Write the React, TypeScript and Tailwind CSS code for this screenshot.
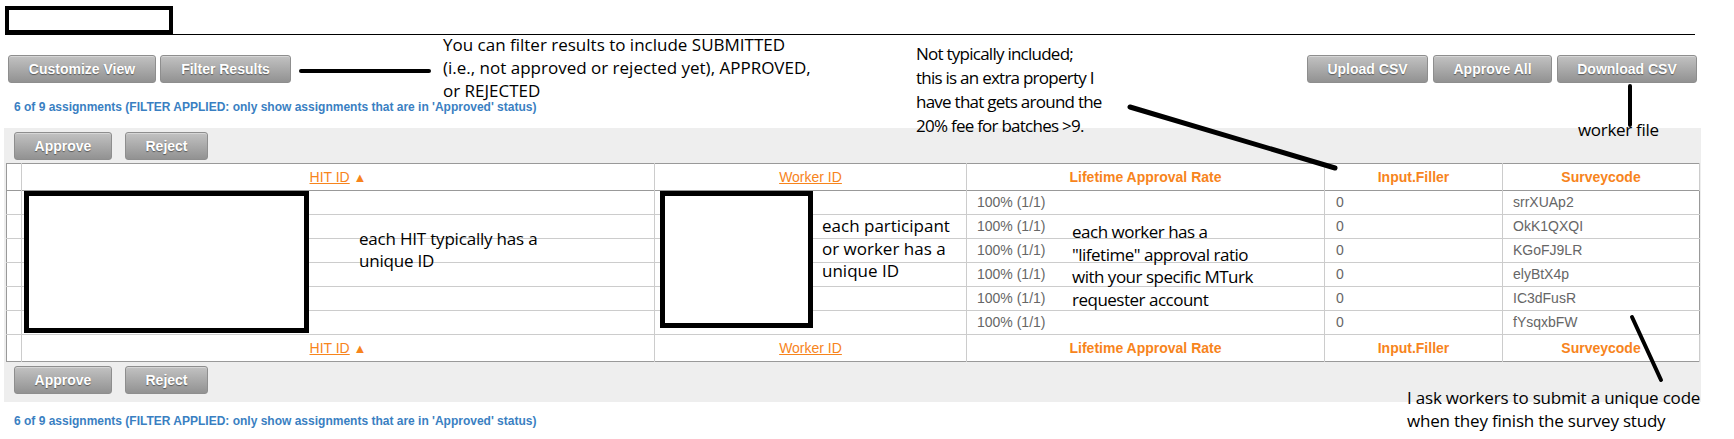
import React from 'react';

const btn =
  'h-[28px] rounded-[3px] border border-[#8e8e8e] bg-linear-to-b from-[#c2c2c2] to-[#929292] text-[14px] font-bold text-white [text-shadow:0_1px_1px_rgba(0,0,0,0.45)] shadow-[inset_0_1px_0_rgba(255,255,255,0.35)]';

const codes = ['srrXUAp2', 'OkK1QXQI', 'KGoFJ9LR', 'elyBtX4p', 'IC3dFusR', 'fYsqxbFW'];

function Note({ className, lines }: { className: string; lines: string[] }) {
  return (
    <div className={`absolute whitespace-nowrap text-black font-['Open_Sans',sans-serif] ${className}`}>
      {lines.map((l) => (
        <div key={l}>{l}</div>
      ))}
    </div>
  );
}

function HeaderRow({ bottom }: { bottom?: boolean }) {
  const base = 'border-x border-[#cccccc] text-center text-[14px] text-[#f7841c]';
  return (
    <tr className={`h-[27px] ${bottom ? 'border-t border-[#cccccc]' : 'border-b border-[#999999]'}`}>
      <td className="border-r border-[#cccccc]" />
      <td className={base}>
        <span className="underline">HIT ID</span> <span className="text-[13px]">▲</span>
      </td>
      <td className={base}>
        <span className="underline">Worker ID</span>
      </td>
      <td className={`${base} font-bold`}>Lifetime Approval Rate</td>
      <td className={`${base} font-bold`}>Input.Filler</td>
      <td className={`${base} font-bold`}>Surveycode</td>
    </tr>
  );
}

function Actions() {
  return (
    <div className="flex gap-[13px] pl-[10px]">
      <button className={`${btn} w-[98px]`}>Approve</button>
      <button className={`${btn} w-[83px]`}>Reject</button>
    </div>
  );
}

const status =
  "6 of 9 assignments (FILTER APPLIED: only show assignments that are in 'Approved' status)";

export default function App() {
  return (
    <div className="relative h-[439px] w-[1734px] overflow-hidden bg-white font-['Liberation_Sans',Arial,sans-serif]">
      {/* title bar */}
      <div className="ml-[5px] w-[1690px] border-b border-black pt-[6px]">
        <div className="h-[28px] w-[168px] border-4 border-black bg-white" />
      </div>

      {/* toolbar */}
      <div className="mt-[20px] flex justify-between pl-[8px] pr-[37px]">
        <div className="flex gap-[4px]">
          <button className={`${btn} w-[148px]`}>Customize View</button>
          <button className={`${btn} w-[131px]`}>Filter Results</button>
        </div>
        <div className="flex gap-[5px]">
          <button className={`${btn} w-[121px]`}>Upload CSV</button>
          <button className={`${btn} w-[119px]`}>Approve All</button>
          <button className={`${btn} w-[140px]`}>Download CSV</button>
        </div>
      </div>

      <div className="mt-[17px] pl-[14px] text-[12px] leading-[14px] font-bold text-[#3a7fc2]">{status}</div>

      {/* results panel */}
      <div className="mt-[14px] ml-[4px] w-[1697px] bg-[#eeeeee] pt-[4px] pb-[8px]">
        <Actions />
        <table className="mt-[3px] ml-[2px] w-[1693px] table-fixed border-collapse border border-[#999999] bg-white">
          <colgroup>
            <col className="w-[15px]" />
            <col className="w-[633px]" />
            <col className="w-[312px]" />
            <col className="w-[358px]" />
            <col className="w-[178px]" />
            <col className="w-[197px]" />
          </colgroup>
          <tbody>
            <HeaderRow />
            {codes.map((c) => (
              <tr key={c} className="h-[24px] border-b border-[#cccccc] text-[14px] text-[#666666]">
                <td className="border-r border-[#cccccc]" />
                <td className="border-r border-[#cccccc]" />
                <td className="border-r border-[#cccccc]" />
                <td className="border-r border-[#cccccc] pl-[10px]">100% (1/1)</td>
                <td className="border-r border-[#cccccc] pl-[11px]">0</td>
                <td className="pl-[10px]">{c}</td>
              </tr>
            ))}
            <HeaderRow bottom />
          </tbody>
        </table>
        <div className="mt-[4px]">
          <Actions />
        </div>
      </div>

      <div className="mt-[12px] pl-[14px] text-[12px] leading-[14px] font-bold text-[#3a7fc2]">{status}</div>

      {/* redaction boxes */}
      <div className="absolute left-[24px] top-[191px] h-[142px] w-[285px] border-[5px] border-black bg-white" />
      <div className="absolute left-[660px] top-[191px] h-[137px] w-[153px] border-[5px] border-black bg-white" />

      {/* annotation strokes */}
      <svg className="pointer-events-none absolute inset-0" width="1734" height="439">
        <g stroke="#000" strokeLinecap="round">
          <line x1="301" y1="71" x2="429" y2="71" strokeWidth="4" />
          <line x1="1130" y1="107" x2="1335" y2="168" strokeWidth="5" />
          <line x1="1630" y1="86" x2="1630" y2="125" strokeWidth="4" />
          <line x1="1632" y1="317" x2="1661" y2="380" strokeWidth="4" />
        </g>
      </svg>

      {/* annotation text */}
      <Note
        className="left-[443px] top-[33px] text-[17px] leading-[23px]"
        lines={['You can filter results to include SUBMITTED', '(i.e., not approved or rejected yet), APPROVED,', 'or REJECTED']}
      />
      <Note
        className="left-[916px] top-[42px] text-[17px] leading-[24px] tracking-[-0.75px]"
        lines={['Not typically included;', 'this is an extra property I', 'have that gets around the', '20% fee for batches >9.']}
      />
      <Note className="left-[1578px] top-[118px] text-[17px] leading-[23px] tracking-[-0.3px]" lines={['worker file']} />
      <Note
        className="left-[359px] top-[228px] text-[17px] leading-[22px] tracking-[-0.2px]"
        lines={['each HIT typically has a', 'unique ID']}
      />
      <Note
        className="left-[822px] top-[215px] text-[17px] leading-[22.5px]"
        lines={['each participant', 'or worker has a', 'unique ID']}
      />
      <Note
        className="left-[1072px] top-[221px] text-[17px] leading-[22.7px] tracking-[-0.5px]"
        lines={['each worker has a', '"lifetime" approval ratio', 'with your specific MTurk', 'requester account']}
      />
      <Note
        className="left-[1407px] top-[386px] text-[17px] leading-[23px] tracking-[-0.2px]"
        lines={['I ask workers to submit a unique code', 'when they finish the survey study']}
      />
    </div>
  );
}
